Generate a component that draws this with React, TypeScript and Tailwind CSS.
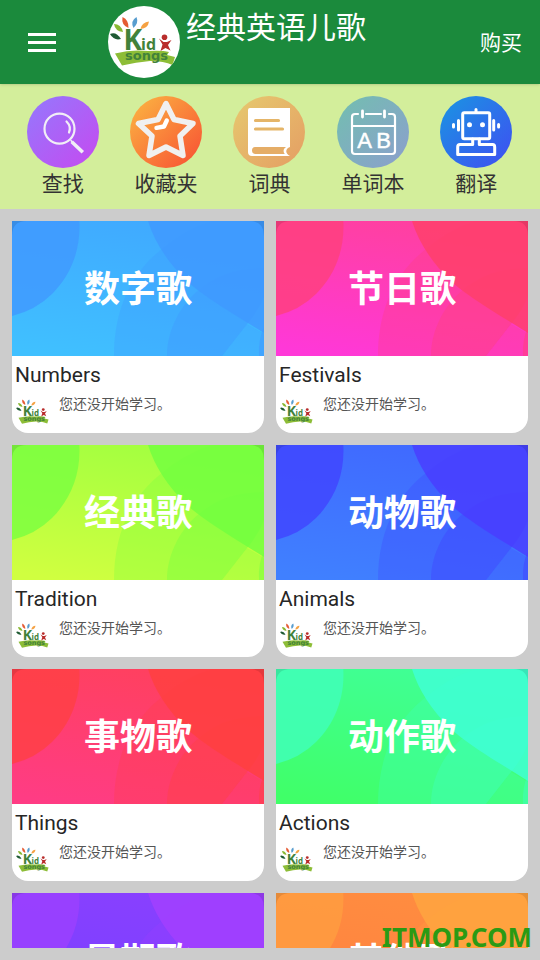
import { useId, type ReactNode } from "react";

interface Category {
	title: string;
	name: string;
	base: [string, string];
	accent: string;
	deep: string;
}

const categories: Category[] = [
	{ title: "数字歌", name: "Numbers", base: ["#40c0ff", "#40aaff"], accent: "#4098ff", deep: "#4098ff" },
	{ title: "节日歌", name: "Festivals", base: ["#ff38d8", "#ff40a0"], accent: "#ff407c", deep: "#ff4068" },
	{ title: "经典歌", name: "Tradition", base: ["#d0ff40", "#a4ff40"], accent: "#78ff40", deep: "#70ff40" },
	{ title: "动物歌", name: "Animals", base: ["#4080ff", "#406aff"], accent: "#4044ff", deep: "#4a3cff" },
	{ title: "事物歌", name: "Things", base: ["#ff3c84", "#ff4060"], accent: "#ff4044", deep: "#ff403e" },
	{ title: "动作歌", name: "Actions", base: ["#40ff68", "#40ff94"], accent: "#40ffbc", deep: "#40ffd8" },
	{ title: "星期歌", name: "Weekdays", base: ["#7840ff", "#8840ff"], accent: "#9c40ff", deep: "#a440ff" },
	{ title: "其他歌", name: "Others", base: ["#ff8040", "#ff8c40"], accent: "#ff9e40", deep: "#ffa640" },
];

function KidSongsLogo({ className }: { className?: string }) {
	return (
		<svg viewBox="0 0 72 72" className={className} role="img" aria-label="Kid songs">
			{/* Leaves */}
			<path d="M2 28Q8 25 13 33Q6 35 2 28Z" fill="#1f5a33" />
			<path d="M6 18Q13 18 15 26Q7 25 6 18Z" fill="#8ab833" />
			<path d="M14.500 11Q21 14 20.500 22Q13 19 14.500 11Z" fill="#e55b33" />
			<path d="M28.500 11Q31 17 25.500 22Q22 15 28.500 11Z" fill="#589dcf" />
			<path d="M41 15.500Q40 22.500 32.500 23Q34 16 41 15.500Z" fill="#f5a142" />
			{/* Banner */}
			<path
				d="M7 47.500Q24 43 40 45Q54 44 61 46L59 49L67 51L64.500 59Q56 55 42 55Q28 56 14 59.500Z"
				fill="#8dbd37"
			/>
			<g fontWeight="700" fill="#42823a">
				<text x="15.500" y="44" fontSize="28" fontFamily="'Open Sans', sans-serif">
					K
				</text>
				<text x="33" y="43.500" fontSize="16" fontFamily="'Open Sans', sans-serif">
					id
				</text>
				<text x="17" y="54" fontSize="13" fontFamily="'DejaVu Sans', sans-serif">
					songs
				</text>
			</g>
			{/* Child */}
			<g fill="#b92d2c">
				<circle cx="56.500" cy="31.200" r="2.800" />
				<path d="M51 32.500L55.500 36H59L63.500 34L60 39L62.500 44.500L57.500 42L52.500 45L54.500 38.500Z" />
			</g>
		</svg>
	);
}

function RoundIcon({ from, to, children }: { from: string; to: string; children: ReactNode }) {
	const id = useId();
	return (
		<svg viewBox="0 0 72 72" className="size-18" fill="none" strokeLinecap="round" strokeLinejoin="round" aria-hidden="true">
			<defs>
				<linearGradient id={id} x1="0.15" y1="0.15" x2="0.85" y2="0.85">
					<stop stopColor={from} />
					<stop offset="1" stopColor={to} />
				</linearGradient>
			</defs>
			<circle cx="36" cy="36" r="36" fill={`url(#${id})`} />
			{children}
		</svg>
	);
}

function SearchIcon() {
	return (
		<RoundIcon from="#9b72fb" to="#bf50f2">
			<g stroke="#f1eef6">
				<circle cx="32.500" cy="32.700" r="15" strokeWidth="2.200" />
				<path d="M39.500 25.500C43 29 43.500 33 42 36.500" strokeWidth="2.200" />
				<path d="M44 44.500L46 47" strokeWidth="1.500" />
				<path d="M46 47L54.500 55" strokeWidth="3.600" strokeLinecap="square" />
			</g>
		</RoundIcon>
	);
}

function StarIcon() {
	return (
		<RoundIcon from="#fba840" to="#f85d35">
			<path
				d="M36 7.500L44 23.500L63 27.500L50 40L53 59.500L36 51L19 59.500L22 40L8.500 27.500L28 23.500Z"
				stroke="#f0f0f0"
				strokeWidth="5.500"
			/>
			<path d="M36.800 24.500L34 30.500L26.500 31.800" stroke="#fff" strokeWidth="4.400" />
		</RoundIcon>
	);
}

function DictionaryIcon() {
	return (
		<RoundIcon from="#e6c36d" to="#e5a465">
			<path d="M17 12H57V51C52 53 52 57 57 60H19Q15 60 15 56V14Q15 12 17 12Z" fill="#fff" />
			<path d="M22 51H53C50 53 50 56 52 58H22Q19 57.500 19 54.500Q19 51 22 51Z" fill="#e5ad67" />
			<path d="M22.500 24.500H45.500M22.500 33H49.500" stroke="#e5b568" strokeWidth="3.200" />
		</RoundIcon>
	);
}

function WordBookIcon() {
	return (
		<RoundIcon from="#76bab4" to="#88a3c9">
			<g stroke="#fff" strokeWidth="2.200">
				<path d="M21 18H18Q15 18 15 21V55Q15 58 18 58H55Q58 58 58 55V21Q58 18 55 18H52" />
				<path d="M29 18H44M15 30H58" />
				<path d="M25.500 15V21M47.500 15V21" strokeWidth="2.800" />
			</g>
			<g
				fill="#fff"
				stroke="#fff"
				strokeWidth="0.500"
				fontSize="22"
				textAnchor="middle"
				fontFamily="'Liberation Sans', sans-serif"
			>
				<text x="27.500" y="52">
					A
				</text>
				<text x="46.500" y="52">
					B
				</text>
			</g>
		</RoundIcon>
	);
}

function RobotIcon() {
	return (
		<RoundIcon from="#1f8be4" to="#3a58f0">
			<g stroke="#fff" strokeWidth="3">
				<rect x="22.700" y="16.700" width="27" height="26" rx="1.500" />
				<path d="M36 13.500V16M18.500 24.500V34M53.700 24.500V34M13.500 28.500V31M58.600 28.500V31" />
				<path d="M32.700 43V48.500H20Q17.700 48.500 17.700 51V58.500H54.700V51Q54.700 48.500 52.500 48.500H39.300V43" />
			</g>
			<circle cx="29.500" cy="28.700" r="2.500" fill="#fff" />
			<circle cx="42.500" cy="28.700" r="2.500" fill="#fff" />
		</RoundIcon>
	);
}

const tools = [
	{ label: "查找", Icon: SearchIcon },
	{ label: "收藏夹", Icon: StarIcon },
	{ label: "词典", Icon: DictionaryIcon },
	{ label: "单词本", Icon: WordBookIcon },
	{ label: "翻译", Icon: RobotIcon },
];

function CoverArt({ base, accent, deep }: Pick<Category, "base" | "accent" | "deep">) {
	const id = useId();
	return (
		<svg
			viewBox="0 0 252 135"
			preserveAspectRatio="none"
			className="col-start-1 row-start-1 size-full"
			aria-hidden="true"
		>
			<defs>
				<linearGradient id={id} x1="0.2" y1="1" x2="0.5" y2="0">
					<stop stopColor={base[0]} />
					<stop offset="1" stopColor={base[1]} />
				</linearGradient>
			</defs>
			<rect width="252" height="135" fill={`url(#${id})`} />
			<path
				d="M102 135C102 95 115 55 150 28Q172 9 200 0H252V75Q246 90 235 103L210 135Z"
				fill={accent}
				fillOpacity="0.3"
			/>
			<path
				d="M155 135C155 108 170 82 187 69Q212 47 252 47V75Q246 90 235 103L210 135Z"
				fill={accent}
				fillOpacity="0.4"
			/>
			<path d="M247 135Q246 118 252 106V135Z" fill={accent} fillOpacity="0.5" />
			<path d="M210 135L235 103L252 113V135Z" fill={accent} fillOpacity="0.25" />
			<path d="M0 0H67.300C69 30 58 55 40 73Q24 89 0 95Z" fill={accent} fillOpacity="0.8" />
			<path d="M136 0Q146 32 175 60C190 74 215 89 252 112V0Z" fill={deep} fillOpacity="0.8" />
			<path d="M0 0H15Q0 0 0 15ZM252 0H237Q252 0 252 15Z" fillOpacity="0.1" />
		</svg>
	);
}

function CategoryCard({ category }: { category: Category }) {
	return (
		<a href={`#${category.name}`} className="block rounded-b-2xl bg-white">
			<div className="grid aspect-[252/135] place-items-center">
				<CoverArt base={category.base} accent={category.accent} deep={category.deep} />
				<h2 className="z-10 col-start-1 row-start-1 pt-0.5 text-4xl font-bold text-white">
					{category.title}
				</h2>
			</div>
			<div className="px-[3px] pb-[3px]">
				<p className="text-[21px] leading-[38px] text-[#262626]">{category.name}</p>
				<div className="flex items-start gap-2">
					<KidSongsLogo className="size-9 shrink-0" />
					<p className="text-sm text-[#555555]">您还没开始学习。</p>
				</div>
			</div>
		</a>
	);
}

export default function App() {
	return (
		<div className="relative flex h-screen flex-col bg-[#cccccc] font-['Roboto','Noto_Sans_CJK_SC',sans-serif]">
			<header className="z-10 flex items-center bg-[#1b8a3c] py-1.5 pr-[18px] pl-7 text-white shadow">
				<button type="button" aria-label="菜单" className="flex w-7 flex-col gap-[5px]">
					<span className="h-[3px] bg-white" />
					<span className="h-[3px] bg-white" />
					<span className="h-[3px] bg-white" />
				</button>
				<KidSongsLogo className="ml-13 size-18 rounded-full bg-white" />
				<h1 className="ml-1.5 flex-1 self-start text-3xl leading-11">经典英语儿歌</h1>
				<button type="button" className="pt-1 text-[21px]">
					购买
				</button>
			</header>

			<nav className="grid grid-cols-5 bg-[#d3ee9b] pt-3 pr-3 pb-[9px] pl-[11px]">
				{tools.map(({ label, Icon }) => (
					<button
						key={label}
						type="button"
						className="flex flex-col items-center text-[21px] leading-8 text-[#333333]"
					>
						<Icon />
						{label}
					</button>
				))}
			</nav>

			<main className="flex min-h-0 flex-1 flex-col p-3">
				<div className="grid auto-rows-max grid-cols-2 gap-3 overflow-y-auto [scrollbar-width:none]">
					{categories.map((category) => (
						<CategoryCard key={category.name} category={category} />
					))}
				</div>
			</main>

			<p className="absolute right-2 bottom-[5px] z-20 font-['Noto_Sans',sans-serif] text-[26px] leading-9 font-bold text-[#2b9a14]">
				ITMOP.COM
			</p>
		</div>
	);
}
